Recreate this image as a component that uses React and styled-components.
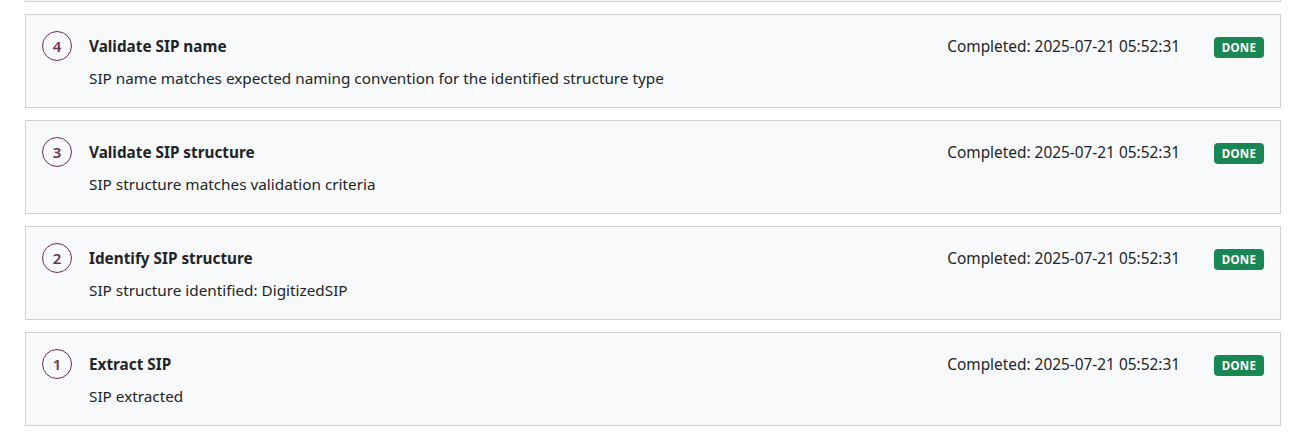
import styled, { createGlobalStyle } from "styled-components";

const GlobalStyle = createGlobalStyle`
  * { box-sizing: border-box; }
  body {
    margin: 0;
    background: #ffffff;
    font-family: "Noto Sans", "Open Sans", sans-serif;
    color: #212529;
  }
`;

const Page = styled.div`
  padding: 0 25px;
  display: flex;
  flex-direction: column;
  gap: 12px;
  margin-top: -92px;
`;

const Card = styled.div`
  background: #f8f9fa;
  border: 1px solid #d0d0d0;
  padding: 16px;
  display: flex;
  align-items: flex-start;
  gap: 17px;
  height: 94px;
`;

const StepNumber = styled.div`
  flex: none;
  width: 30px;
  height: 30px;
  border-radius: 50%;
  border: 1.5px solid #6b2f5c;
  color: #6b2f5c;
  font-size: 15px;
  font-weight: 600;
  display: flex;
  align-items: center;
  justify-content: center;
`;

const Body = styled.div`
  flex: 1;
  display: flex;
  flex-direction: column;
`;

const TitleRow = styled.div`
  display: flex;
  align-items: center;
  height: 30px;
`;

const Title = styled.div`
  flex: 1;
  font-size: 15.3px;
  font-weight: 700;
`;

const Time = styled.div`
  font-size: 15.4px;
  margin-right: 34px;
`;

const Badge = styled.span`
  background: #198754;
  color: #fff;
  font-size: 11.5px;
  font-weight: 700;
  letter-spacing: 0.3px;
  border-radius: 4px;
  height: 21px;
  width: 50px;
  margin-top: 2px;
  display: flex;
  align-items: center;
  justify-content: center;
`;

const Description = styled.div`
  font-size: 15.3px;
  line-height: 24px;
  margin-top: 5px;
`;

const steps = [
  {
    n: 4,
    title: "Validate SIP name",
    desc: "SIP name matches expected naming convention for the identified structure type",
  },
  { n: 3, title: "Validate SIP structure", desc: "SIP structure matches validation criteria" },
  { n: 2, title: "Identify SIP structure", desc: "SIP structure identified: DigitizedSIP" },
  { n: 1, title: "Extract SIP", desc: "SIP extracted" },
];

export default function App() {
  return (
    <>
      <GlobalStyle />
      <Page>
        {/* previous step, scrolled mostly out of view */}
        <Card />
        {steps.map((s) => (
          <Card key={s.n}>
            <StepNumber>{s.n}</StepNumber>
            <Body>
              <TitleRow>
                <Title>{s.title}</Title>
                <Time>Completed: 2025-07-21 05:52:31</Time>
                <Badge>DONE</Badge>
              </TitleRow>
              <Description>{s.desc}</Description>
            </Body>
          </Card>
        ))}
      </Page>
    </>
  );
}
